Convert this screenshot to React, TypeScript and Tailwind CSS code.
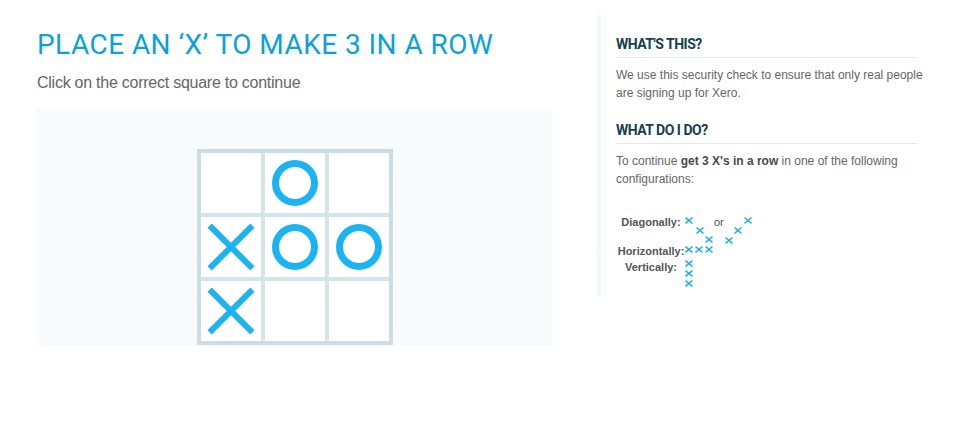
import type { ReactNode } from 'react';

const BLUE = '#1cb3f5';

type Cell = 'x' | 'o' | '';

const BOARD: Cell[] = ['', 'o', '', 'x', 'o', 'o', 'x', '', ''];

function BigMark({ kind }: { kind: Cell }) {
  if (kind === 'o') {
    return (
      <svg width="60" height="60" viewBox="0 0 60 60">
        <circle cx="30" cy="30" r="19.5" fill="none" stroke={BLUE} strokeWidth="7" />
      </svg>
    );
  }
  if (kind === 'x') {
    return (
      <svg width="60" height="60" viewBox="0 0 60 60">
        <line x1="8.6" y1="8.6" x2="51.4" y2="51.4" stroke={BLUE} strokeWidth="6" />
        <line x1="51.4" y1="8.6" x2="8.6" y2="51.4" stroke={BLUE} strokeWidth="6" />
      </svg>
    );
  }
  return null;
}

// little x's used in the help table, positions are top-left of each mark
function Marks({ w, h, at }: { w: number; h: number; at: [number, number][] }) {
  return (
    <svg width={w} height={h} viewBox={`0 0 ${w} ${h}`} className="block shrink-0">
      {at.map(([x, y], i) => (
        <g key={i} stroke="#1aaff3" strokeWidth="1.6">
          <line x1={x + 0.5} y1={y + 0.5} x2={x + 7.5} y2={y + 6.5} />
          <line x1={x + 7.5} y1={y + 0.5} x2={x + 0.5} y2={y + 6.5} />
        </g>
      ))}
    </svg>
  );
}

function Row({ label, children, className = '', labelClass = '' }: { label: string; children: ReactNode; className?: string; labelClass?: string }) {
  return (
    <div className={`flex items-start ${className}`}>
      <div className={`w-[68px] shrink-0 text-center text-[11px] font-bold leading-[13px] whitespace-nowrap text-[#555] ${labelClass}`}>
        {label}
      </div>
      {children}
    </div>
  );
}

function SideHeading({ children, className = '' }: { children: ReactNode; className?: string }) {
  return (
    <h3
      className={`mr-[20px] border-b border-[#e3e8ea] pb-[4px] text-[14px] leading-[18px] font-bold tracking-[-0.5px] text-[#16404f] ${className}`}
      style={{ fontFamily: 'Roboto, sans-serif' }}
    >
      {children}
    </h3>
  );
}

export default function App() {
  return (
    <div className="flex min-h-[429px] items-start bg-white pl-[37px]" style={{ fontFamily: '"Liberation Sans", Arial, sans-serif' }}>
      <main className="w-[515px] shrink-0 pt-[31px]">
        <h1
          className="text-[28px] leading-[28px] font-normal tracking-[0.45px] whitespace-nowrap text-[#0aa2d8]"
          style={{ fontFamily: 'Roboto, sans-serif' }}
        >
          PLACE AN ‘X’ TO MAKE 3 IN A ROW
        </h1>
        <p className="mt-[14px] text-[16px] leading-[20px] tracking-[-0.25px] text-[#666]">
          Click on the correct square to continue
        </p>

        <div className="mt-[16px] flex h-[236px] justify-center bg-[#f7fbfe] pt-[40px]">
          <div className="grid grid-cols-[60px_60px_60px] grid-rows-[60px_60px_60px] gap-[4px] self-start border-4 border-[#c9dce7] bg-[#d4e3ec]">
            {BOARD.map((c, i) => (
              <div key={i} className="flex items-center justify-center bg-white">
                <BigMark kind={c} />
              </div>
            ))}
          </div>
        </div>
      </main>

      <aside className="mt-[15px] ml-[45px] w-[340px] bg-[linear-gradient(to_right,#f1f3f4,#fafbfb_5px,#fff_13px)] pt-[20px] pb-[7px] pl-[19px]">
        <SideHeading>WHAT&apos;S THIS?</SideHeading>
        <p className="mt-[8px] w-[320px] text-[12px] leading-[18px] text-[#666]">
          We use this security check to ensure that only real people are signing up for Xero.
        </p>

        <SideHeading className="mt-[19px]">WHAT DO I DO?</SideHeading>
        <p className="mt-[8px] w-[300px] text-[12px] leading-[18px] text-[#666]">
          To continue <b className="text-[#4a4a4a]">get 3 X&apos;s in a row</b> in one of the following configurations:
        </p>

        <div className="mt-[28px] ml-[1px]">
          <Row label="Diagonally:" className="h-[29px]">
            <Marks w={29} h={28} at={[[0, 1], [11, 11], [20, 20]]} />
            <span className="text-[11px] leading-[13px] text-[#555]">or</span>
            <Marks w={29} h={28} at={[[1, 21], [10, 11], [20, 1]]} />
          </Row>
          <Row label="Horizontally:" className="h-[14px]">
            <Marks w={29} h={9} at={[[0, 1], [10, 1], [20, 1]]} />
          </Row>
          <Row label="Vertically:" labelClass="pt-[2px]">
            <Marks w={9} h={30} at={[[0, 1], [0, 11], [0, 21]]} />
          </Row>
        </div>
      </aside>
    </div>
  );
}
